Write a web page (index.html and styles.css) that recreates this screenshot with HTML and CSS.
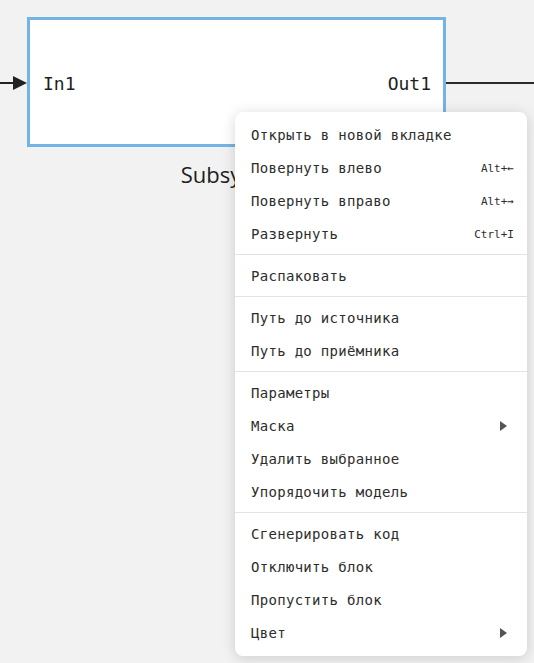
FILE: index.html
```html
<!DOCTYPE html>
<html lang="ru">
<head>
<meta charset="utf-8">
<title>Subsystem</title>
<link rel="stylesheet" href="styles.css">
</head>
<body>
<div class="canvas">
  <svg class="wire-in" width="28" height="16" viewBox="0 0 28 16">
    <line x1="0" y1="8" x2="15" y2="8" stroke="#222" stroke-width="2"/>
    <polygon points="13,1 27,8 13,15" fill="#222"/>
  </svg>
  <div class="wire-out"></div>
  <div class="node">
    <div class="block">
      <span class="port">In1</span>
      <span class="port">Out1</span>
    </div>
    <div class="node-name">Subsystem</div>
  </div>

  <div class="menu">
    <div class="group">
      <div class="item"><span>Открыть в новой вкладке</span></div>
      <div class="item"><span>Повернуть влево</span><span class="key">Alt+←</span></div>
      <div class="item"><span>Повернуть вправо</span><span class="key">Alt+→</span></div>
      <div class="item"><span>Развернуть</span><span class="key">Ctrl+I</span></div>
    </div>
    <div class="sep"></div>
    <div class="group">
      <div class="item"><span>Распаковать</span></div>
    </div>
    <div class="sep"></div>
    <div class="group">
      <div class="item"><span>Путь до источника</span></div>
      <div class="item"><span>Путь до приёмника</span></div>
    </div>
    <div class="sep"></div>
    <div class="group">
      <div class="item"><span>Параметры</span></div>
      <div class="item"><span>Маска</span><span class="arrow"></span></div>
      <div class="item"><span>Удалить выбранное</span></div>
      <div class="item"><span>Упорядочить модель</span></div>
    </div>
    <div class="sep"></div>
    <div class="group">
      <div class="item"><span>Сгенерировать код</span></div>
      <div class="item"><span>Отключить блок</span></div>
      <div class="item"><span>Пропустить блок</span></div>
      <div class="item"><span>Цвет</span><span class="arrow"></span></div>
    </div>
  </div>
</div>
</body>
</html>
```

FILE: styles.css
```css
html, body {
  margin: 0;
  padding: 0;
  background: #f2f2f2;
}

.canvas {
  position: relative;
  width: 534px;
  height: 663px;
  overflow: hidden;
}

.wire-in {
  position: absolute;
  left: 0;
  top: 75px;
  display: block;
}

.wire-out {
  position: absolute;
  left: 446px;
  top: 82px;
  width: 88px;
  height: 2px;
  background: #2a2a2a;
}

.node {
  position: absolute;
  left: 27px;
  top: 17px;
  width: 419px;
  display: flex;
  flex-direction: column;
  align-items: center;
}

.block {
  box-sizing: border-box;
  width: 419px;
  height: 130px;
  background: #fff;
  border: 3px solid #74b4e4;
  display: flex;
  align-items: center;
  justify-content: space-between;
  padding: 3px 12px 0 13px;
}

.port {
  font-family: "DejaVu Sans Mono", monospace;
  font-size: 18px;
  color: #1e1e1e;
}

.node-name {
  margin-top: 12px;
  font-family: "Open Sans", "DejaVu Sans", sans-serif;
  font-size: 22px;
  line-height: 30px;
  color: #1e1e1e;
}

.menu {
  position: absolute;
  left: 235px;
  top: 112px;
  width: 292px;
  box-sizing: border-box;
  padding: 6px 0 7px 0;
  background: #fff;
  border-radius: 8px;
  box-shadow: 0 2px 14px rgba(0, 0, 0, 0.16);
  font-family: "DejaVu Sans Mono", monospace;
  color: #2d2d2d;
}

.group {
  display: flex;
  flex-direction: column;
}

.item {
  height: 33px;
  display: flex;
  align-items: center;
  justify-content: space-between;
  padding: 1px 13px 0 16px;
  box-sizing: border-box;
  font-size: 14px;
  letter-spacing: 0.3px;
}

.key {
  font-size: 11px;
  letter-spacing: 0;
}

.arrow {
  width: 0;
  height: 0;
  margin-right: 7px;
  border-top: 5px solid transparent;
  border-bottom: 5px solid transparent;
  border-left: 7px solid #555;
}

.sep {
  height: 1px;
  margin: 4px 0;
  background: #e3e3e3;
}
```
